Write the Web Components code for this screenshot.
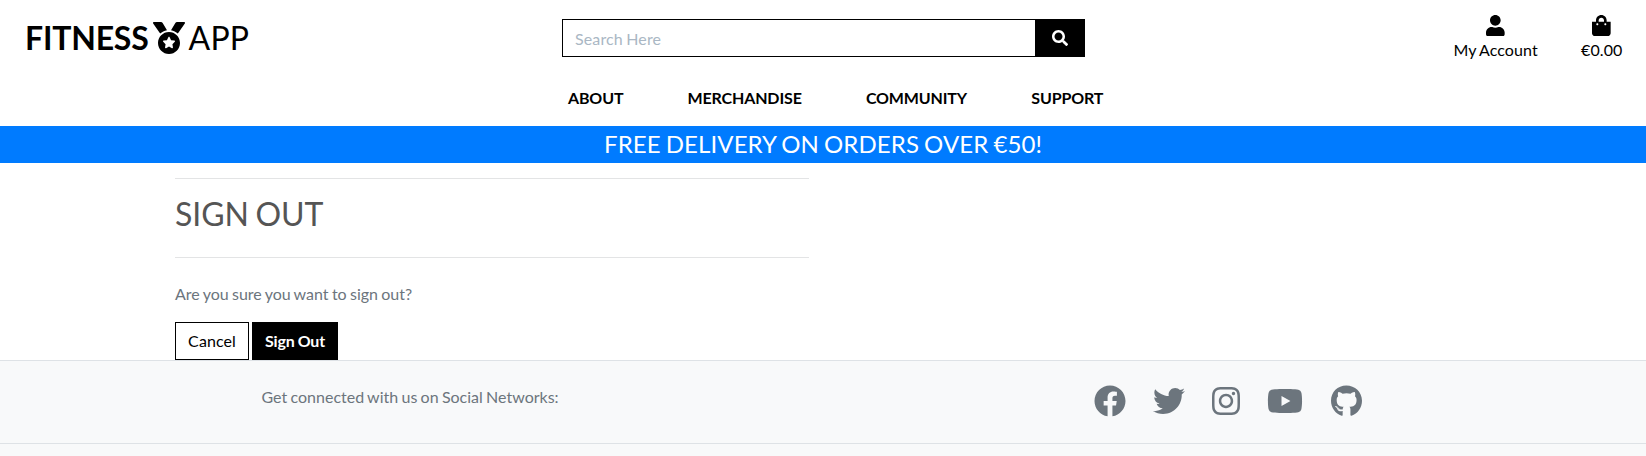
<!DOCTYPE html>
<html lang="en">
<head>
<meta charset="utf-8">
<title>Fitness App - Sign Out</title>
<style>
html,body{margin:0;height:100%}
body{font-family:Lato,sans-serif;font-size:16px;line-height:24px;color:#000;background:#fff;overflow:hidden}
</style>
</head>
<body>
<fit-page></fit-page>
<script>
const ICONS = {
  medal: [512, 'M223.75 130.75L154.62 15.54A31.997 31.997 0 0 0 127.18 0H16.03C3.08 0-4.5 14.57 2.92 25.18l111.27 158.96c29.72-27.77 67.52-46.83 109.56-53.39zM495.97 0H384.82c-11.24 0-21.66 5.9-27.44 15.54l-69.13 115.21c42.04 6.56 79.84 25.62 109.56 53.38L509.08 25.18C516.5 14.57 508.92 0 495.97 0zM256 160c-97.2 0-176 78.8-176 176s78.8 176 176 176 176-78.8 176-176-78.8-176-176-176zm92.52 157.26l-37.93 36.96 8.97 52.22c1.6 9.36-8.26 16.51-16.65 12.09L256 393.88l-46.9 24.65c-8.4 4.45-18.25-2.74-16.65-12.09l8.97-52.22-37.93-36.96c-6.82-6.64-3.05-18.23 6.35-19.59l52.43-7.64 23.43-47.52c2.11-4.28 6.19-6.39 10.28-6.39 4.11 0 8.22 2.14 10.33 6.39l23.43 47.52 52.43 7.64c9.4 1.36 13.17 12.95 6.35 19.59z'],
  search: [512, 'M505 442.7L405.3 343c-4.5-4.5-10.6-7-17-7H372c27.6-35.3 44-79.7 44-128C416 93.1 322.9 0 208 0S0 93.1 0 208s93.1 208 208 208c48.3 0 92.7-16.4 128-44v16.300c0 6.400 2.500 12.500 7 17l99.700 99.700c9.400 9.400 24.600 9.400 33.900 0l28.300-28.300c9.400-9.400 9.400-24.600.1-34zM208 336c-70.700 0-128-57.200-128-128 0-70.700 57.200-128 128-128 70.700 0 128 57.200 128 128 0 70.700-57.200 128-128 128z'],
  user: [448, 'M224 256c70.700 0 128-57.300 128-128S294.700 0 224 0 96 57.300 96 128s57.300 128 128 128zm89.600 32h-16.700c-22.200 10.200-46.900 16-72.900 16s-50.600-5.800-72.900-16h-16.700C60.200 288 0 348.200 0 422.400V464c0 26.500 21.500 48 48 48h352c26.500 0 48-21.500 48-48v-41.600c0-74.200-60.200-134.400-134.400-134.400z'],
  bag: [448, 'M352 160v-32C352 57.420 294.579 0 224 0 153.420 0 96 57.420 96 128v32H0v272c0 44.183 35.817 80 80 80h288c44.183 0 80-35.817 80-80V160h-96zm-192-32c0-35.290 28.710-64 64-64s64 28.710 64 64v32H160v-32zm160 120c-13.255 0-24-10.745-24-24s10.745-24 24-24 24 10.745 24 24-10.745 24-24 24zm-192 0c-13.255 0-24-10.745-24-24s10.745-24 24-24 24 10.745 24 24-10.745 24-24 24z'],
  facebook: [512, 'M504 256C504 119 393 8 256 8S8 119 8 256c0 123.780 90.690 226.380 209.250 245V327.690h-63V256h63v-54.640c0-62.150 37-96.480 93.670-96.480 27.140 0 55.520 4.840 55.520 4.840v61h-31.280c-30.800 0-40.410 19.120-40.410 38.730V256h68.780l-11 71.690h-57.780V501C413.310 482.380 504 379.780 504 256z'],
  twitter: [512, 'M459.370 151.716c.325 4.548.325 9.097.325 13.645 0 138.720-105.583 298.558-298.558 298.558-59.452 0-114.680-17.219-161.137-47.106 8.447.974 16.568 1.299 25.340 1.299 49.055 0 94.213-16.568 130.274-44.832-46.132-.975-84.792-31.188-98.112-72.772 6.498.974 12.995 1.624 19.818 1.624 9.421 0 18.843-1.300 27.614-3.573-48.081-9.747-84.143-51.980-84.143-102.985v-1.299c13.969 7.797 30.214 12.670 47.431 13.319-28.264-18.843-46.781-51.005-46.781-87.391 0-19.492 5.197-37.360 14.294-52.954 51.655 63.675 129.300 105.258 216.365 109.807-1.624-7.797-2.599-15.918-2.599-24.040 0-57.828 46.782-104.934 104.934-104.934 30.213 0 57.502 12.670 76.670 33.137 23.715-4.548 46.456-13.320 66.599-25.340-7.798 24.366-24.366 44.833-46.132 57.827 21.117-2.273 41.584-8.122 60.426-16.243-14.292 20.791-32.161 39.308-52.628 54.253z'],
  instagram: [448, 'M224.100 141c-63.600 0-114.900 51.300-114.900 114.900s51.300 114.900 114.900 114.900S339 319.500 339 255.900 287.700 141 224.100 141zm0 189.600c-41.100 0-74.700-33.500-74.700-74.700s33.500-74.700 74.700-74.700 74.700 33.500 74.700 74.700-33.600 74.700-74.700 74.700zm146.400-194.300c0 14.900-12 26.800-26.800 26.800-14.900 0-26.800-12-26.800-26.800s12-26.800 26.800-26.800 26.800 12 26.800 26.800zm76.100 27.200c-1.700-35.900-9.900-67.700-36.200-93.900-26.200-26.200-58-34.400-93.900-36.200-37-2.100-147.900-2.100-184.900 0-35.800 1.700-67.600 9.900-93.900 36.100s-34.400 58-36.200 93.900c-2.100 37-2.100 147.900 0 184.900 1.700 35.900 9.900 67.700 36.200 93.900s58 34.400 93.900 36.200c37 2.100 147.900 2.100 184.900 0 35.900-1.700 67.700-9.900 93.900-36.200 26.200-26.200 34.400-58 36.200-93.900 2.100-37 2.100-147.800 0-184.800zM398.800 388c-7.800 19.600-22.900 34.700-42.600 42.600-29.500 11.700-99.500 9-132.100 9s-102.700 2.600-132.100-9c-19.600-7.800-34.700-22.900-42.600-42.600-11.700-29.500-9-99.500-9-132.100s-2.600-102.700 9-132.100c7.800-19.600 22.900-34.700 42.600-42.600 29.500-11.700 99.500-9 132.100-9s102.700-2.600 132.100 9c19.600 7.800 34.700 22.900 42.600 42.600 11.700 29.500 9 99.500 9 132.100s2.700 102.700-9 132.100z'],
  youtube: [576, 'M549.655 124.083c-6.281-23.650-24.787-42.276-48.284-48.597C458.781 64 288 64 288 64S117.220 64 74.629 75.486c-23.497 6.322-42.003 24.947-48.284 48.597-11.412 42.867-11.412 132.305-11.412 132.305s0 89.438 11.412 132.305c6.281 23.650 24.787 41.500 48.284 47.821C117.220 448 288 448 288 448s170.780 0 213.371-11.486c23.497-6.321 42.003-24.171 48.284-47.821 11.412-42.867 11.412-132.305 11.412-132.305s0-89.438-11.412-132.305zm-317.510 213.508V175.185l142.739 81.205-142.739 81.201z'],
  github: [496, 'M165.900 397.400c0 2-2.300 3.600-5.200 3.600-3.300.3-5.600-1.300-5.600-3.600 0-2 2.300-3.600 5.200-3.600 3-.3 5.600 1.300 5.600 3.600zm-31.100-4.500c-.7 2 1.300 4.300 4.300 4.900 2.600 1 5.600 0 6.200-2s-1.300-4.300-4.300-5.200c-2.600-.7-5.500.3-6.200 2.300zm44.200-1.700c-2.900.7-4.900 2.600-4.600 4.900.3 2 2.900 3.300 5.900 2.600 2.900-.7 4.900-2.600 4.600-4.600-.3-1.900-3-3.200-5.900-2.900zM244.800 8C106.100 8 0 113.300 0 252c0 110.900 69.800 205.800 169.500 239.200 12.800 2.300 17.300-5.600 17.300-12.100 0-6.200-.3-40.400-.3-61.400 0 0-70 15-84.700-29.800 0 0-11.400-29.100-27.800-36.600 0 0-22.900-15.700 1.600-15.400 0 0 24.900 2 38.600 25.800 21.900 38.600 58.600 27.500 72.900 20.900 2.300-16 8.800-27.100 16-33.700-55.900-6.200-112.300-14.300-112.300-110.500 0-27.500 7.600-41.300 23.600-58.900-2.600-6.500-11.100-33.300 2.600-67.900 20.900-6.500 69 27 69 27 20-5.600 41.500-8.500 62.800-8.500s42.800 2.900 62.800 8.500c0 0 48.100-33.600 69-27 13.700 34.700 5.200 61.400 2.600 67.900 16 17.700 25.800 31.500 25.800 58.900 0 96.500-58.900 104.200-114.800 110.500 9.200 7.900 17 22.900 17 46.400 0 33.700-.3 75.400-.3 83.600 0 6.500 4.600 14.400 17.300 12.100C428.200 457.800 496 362.900 496 252 496 113.300 383.500 8 244.800 8zM97.200 352.900c-1.300 1-1 3.300.7 5.200 1.600 1.600 3.900 2.300 5.200 1 1.300-1 1-3.300-.7-5.200-1.600-1.600-3.900-2.300-5.200-1zm-10.800-8.100c-.7 1.300.3 2.900 2.300 3.900 1.600 1 3.600.7 4.300-.7.7-1.300-.3-2.900-2.300-3.900-2-.6-3.600-.3-4.300.7zm32.400 35.600c-1.600 1.300-1 4.300 1.300 6.200 2.300 2.300 5.200 2.600 6.500 1 1.300-1.300.7-4.300-1.300-6.200-2.200-2.300-5.200-2.600-6.500-1zm-11.400-14.700c-1.600 1-1.600 3.600 0 5.900 1.600 2.300 4.300 3.300 5.600 2.300 1.600-1.300 1.600-3.900 0-6.200-1.400-2.300-4-3.300-5.600-2z']
};

function define(name, css, html) {
  customElements.define(name, class extends HTMLElement {
    constructor() {
      super();
      this.attachShadow({mode: 'open'}).innerHTML = '<style>*{box-sizing:border-box}' + css + '</style>' + html;
    }
  });
}

customElements.define('fit-icon', class extends HTMLElement {
  connectedCallback() {
    const [w, d] = ICONS[this.getAttribute('name')];
    const root = this.shadowRoot || this.attachShadow({mode: 'open'});
    root.innerHTML = `<style>:host{display:block;flex:none}svg{display:block;height:var(--size,16px);fill:currentColor}</style><svg viewBox="0 0 ${w} 512"><path d="${d}"/></svg>`;
    root.querySelector('svg').style.aspectRatio = w + '/512';
  }
});

define('fit-logo', `:host{display:flex;align-items:center;font-size:32px;line-height:48px;padding:14px 0 0 25px;height:62px;white-space:nowrap}
b{font-weight:700;letter-spacing:-.2px}span{font-weight:400;letter-spacing:.2px}fit-icon{--size:32px;margin:0 4px}`,
`<b>FITNESS</b><fit-icon name="medal"></fit-icon><span>APP</span>`);

define('fit-search', `:host{display:flex;width:523px;height:38px;margin-top:19px}
input{flex:1;min-width:0;border:1px solid #000;border-right:0;border-radius:0;padding:8px 12px 6px;font:inherit;word-spacing:-.8px;letter-spacing:.12px;background:#fff}
input::placeholder{color:#aab7c4;opacity:1}
button{width:50px;border:0;padding:0 1px 0 0;background:#000;color:#fff;display:flex;align-items:center;justify-content:center}`,
`<input type="text" placeholder="Search Here"><button aria-label="Search"><fit-icon name="search"></fit-icon></button>`);

define('fit-action', `:host{display:flex;flex-direction:column;align-items:center;white-space:nowrap;word-spacing:-.8px;letter-spacing:.08px}`, `<slot name="icon"></slot><slot></slot>`);

define('fit-nav', `:host{display:flex;gap:64.2px;font-weight:700;letter-spacing:-.14px;padding:24px 0 0 568px;height:64px;white-space:nowrap}`, `<slot></slot>`);

define('fit-header', `:host{display:block;height:126px}
.top{display:grid;grid-template-columns:562px 523px 1fr;height:62px}
.actions{display:flex;justify-content:flex-end;gap:43.4px;padding:14.6px 23.6px 0 0}
fit-icon{--size:21.33px;margin-bottom:2.07px}`,
`<div class="top"><fit-logo></fit-logo><fit-search></fit-search><div class="actions">
<fit-action><fit-icon slot="icon" name="user"></fit-icon>My Account</fit-action>
<fit-action><fit-icon slot="icon" name="bag"></fit-icon>€0.00</fit-action></div></div>
<fit-nav><span>ABOUT</span><span>MERCHANDISE</span><span>COMMUNITY</span><span>SUPPORT</span></fit-nav>`);

define('fit-banner', `:host{display:block;height:37px;background:#007bff;color:#fff;font-size:24px;line-height:35px;word-spacing:-1.2px;letter-spacing:.1px;text-align:center}`, `<slot></slot>`);

define('fit-button', `:host{display:block;box-sizing:border-box;height:38px;width:74px;border:1px solid #000;padding:6px 0;text-align:center;letter-spacing:.08px;white-space:nowrap}
:host([solid]){width:86px;background:#000;color:#fff;font-weight:700;word-spacing:-.8px;letter-spacing:-.14px}`, `<slot></slot>`);

define('fit-signout', `:host{display:block;margin:15px 0 0 175px;width:634px;height:182px}
hr{margin:0;border:0;border-top:1px solid #e3e4e5}
h2{margin:0;height:78px;padding-top:16px;font-size:32px;line-height:38px;font-weight:400;word-spacing:-1.6px;letter-spacing:-.06px;color:#555}
p{margin:24px 0 16px;color:#6c757d;word-spacing:-.8px}
div{display:flex;gap:3px}`,
`<hr><h2>SIGN OUT</h2><hr><p>Are you sure you want to sign out?</p><div><fit-button>Cancel</fit-button><fit-button solid>Sign Out</fit-button></div>`);

define('fit-footer', `:host{display:block;height:96px;background:#f8f9fa;color:#6c757d;border-top:1px solid #dee2e6}
section{display:flex;justify-content:space-between;height:83px;border-bottom:1px solid #dee2e6;padding:24px 284.5px 0 261.5px}
span{word-spacing:-.8px}
nav{display:flex;gap:27.2px}
fit-icon{--size:32px}fit-icon[name=facebook]{margin-right:-.5px}`,
`<section><span>Get connected with us on Social Networks:</span><nav><fit-icon name="facebook"></fit-icon><fit-icon name="twitter"></fit-icon><fit-icon name="instagram"></fit-icon><fit-icon name="youtube"></fit-icon><fit-icon name="github"></fit-icon></nav></section>`);

define('fit-page', `:host{display:block}`,
`<fit-header></fit-header><fit-banner>FREE DELIVERY ON ORDERS OVER €50!</fit-banner><fit-signout></fit-signout><fit-footer></fit-footer>`);
</script>
</body>
</html>
